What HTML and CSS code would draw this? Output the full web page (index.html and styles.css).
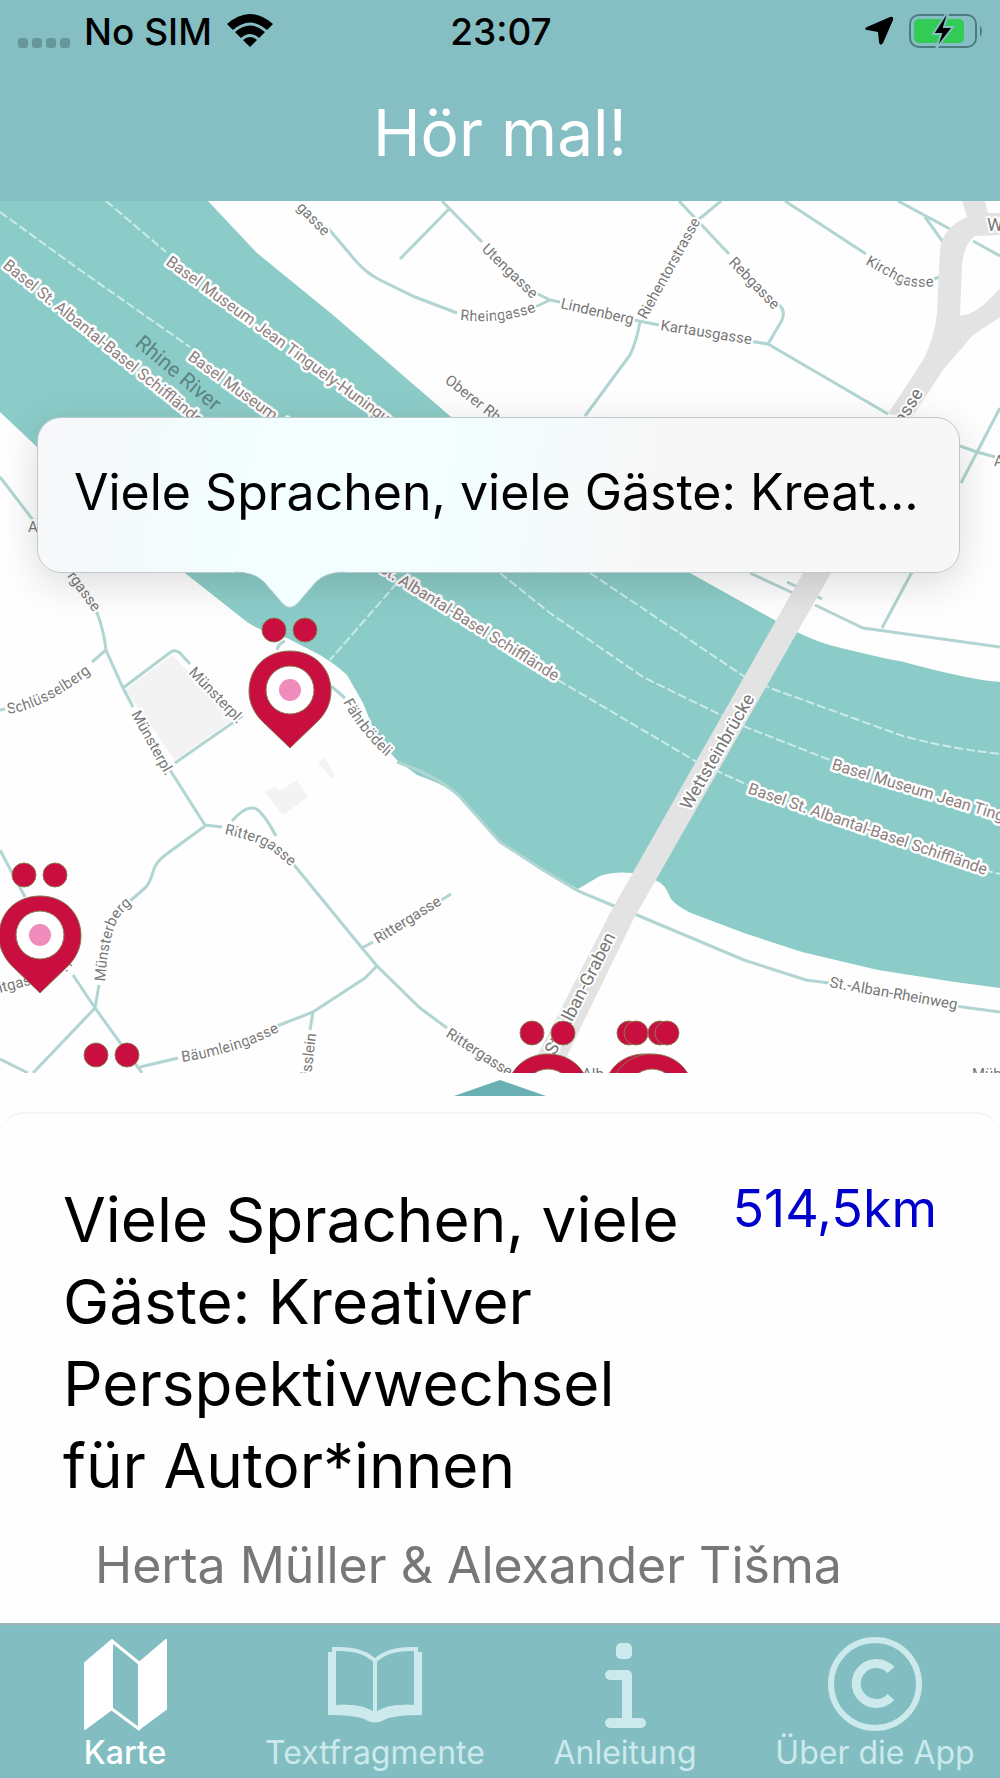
FILE: index.html
```
<!DOCTYPE html>
<html lang="de">
<head>
    <meta charset="UTF-8">
    <meta name="viewport" content="width=device-width, initial-scale=1.0">
    <title>Hör mal!</title>
    <link rel="stylesheet" href="styles.css">
</head>
<body>

    <header class="header">
        <div class="status-bar">
            <div class="status-left">
                <svg class="signal" width="52" height="10" viewBox="0 0 52 10">
                    <rect x="0" width="10" height="10" rx="3"/>
                    <rect x="14" width="10" height="10" rx="3"/>
                    <rect x="28" width="10" height="10" rx="3"/>
                    <rect x="42" width="10" height="10" rx="3"/>
                </svg>
                <span>No SIM</span>
                <svg width="48" height="36" viewBox="0 0 48 36">
                    <path d="M1 11 Q24 -9 47 11 L41 17 Q24 2 7 17 Z"/>
                    <path d="M9 19 Q24 6 39 19 L33 25 Q24 17 15 25 Z"/>
                    <path d="M17 27 Q24 21 31 27 L24 34 Z"/>
                </svg>
            </div>
            <div class="status-time">23:07</div>
            <div class="status-right">
                <svg width="30" height="30" viewBox="0 0 30 30">
                    <path d="M26 1 Q30 0 29 4 L19 27 Q16 31 15 26 L14 16 L3 14 Q-1 13 3 11 Z"/>
                </svg>
                <svg width="76" height="38" viewBox="0 0 76 38">
                    <rect x="2" y="3" width="66" height="32" rx="9" fill="none" stroke="#4c7b80" stroke-width="2"/>
                    <path d="M72 13 Q76 19 72 25 Z" fill="#4c7b80"/>
                    <rect x="6" y="7" width="50" height="24" rx="5" fill="#31cb55"/>
                    <path d="M38 2 L25 22 H33 L28 37 L45 15 H36 L40 2 Z" fill="#000" stroke="#85bfc3" stroke-width="2"/>
                </svg>
            </div>
        </div>
        <h1>Hör mal!</h1>
    </header>

    <main>
        <div class="map">
            <svg class="map-canvas" viewBox="0 201 1000 872">
                <defs>
                    <g id="pin">
                        <circle cx="-16" cy="-60" r="12"/>
                        <circle cx="15" cy="-60" r="12"/>
                        <path d="M0 -39 C24 -39 41 -22 41 1 C41 14 35 24 28 31 L0 58 L-28 31 C-35 24 -41 14 -41 1 C-41 -22 -24 -39 0 -39 Z"/>
                        <circle r="24" class="pin-ring"/>
                        <circle r="11" class="pin-dot"/>
                    </g>
                    <path id="kirchgasse" d="M865 264 L900 283 Q914 290 944 285"/>
                    <path id="muensterberg" d="M105 982 Q108 940 117 921 Q122 911 136 901"/>
                    <path id="rittergasse" d="M224 834 Q256 841 266 847 Q275 852 292 868"/>
                    <path id="rheingasse" d="M460 320 Q502 325 540 310"/>
                    <path id="schluesselberg" d="M8 714 Q46 709 98 667"/>
                    <path id="baeumleingasse" d="M182 1062 Q240 1053 280 1031"/>
                    <path id="faehrboedeli" d="M343 702 Q362 738 400 768"/>
                </defs>

                <!-- Rhine -->
                <path class="river" d="M0 201 H208 L257 253 L333 315 L450 416 L560 500 L690 573 L778 622 Q810 640 833 646 Q890 660 900 661 Q970 680 1000 682 V988 L955 982 L878 970 L802 952 L744 933 L691 913 Q673 904 670 897 Q665 884 657 881 L633 873 Q614 871 600 876 L578 889 L543 870 L500 842 L467 805 Q456 793 450 790 Q440 783 417 775 L397 760 L378 740 L363 703 L347 675 Q335 664 320 655 L287 638 Q262 632 247 622 L185 573 L36 446 L0 412 Z"/>
                <g class="ferry">
                    <path d="M0 212 L80 270 L190 347"/>
                    <path d="M106 201 L166 252"/>
                    <path d="M500 573 L550 613 L643 677 L723 716 L748 728 L830 760"/>
                    <path d="M590 573 L745 677 L770 688 L900 735 Q940 747 1000 754"/>
                    <path d="M558 680 L697 762 L748 785"/>
                    <path d="M984 870 L1000 874"/>
                    <path d="M397 583 L330 660"/>
                </g>

                <!-- squares and buildings -->
                <g class="block">
                    <path d="M172 655 L235 718 L175 760 L125 690 Z"/>
                    <path d="M265 792 L275 787 L280 791 L297 780 L308 797 L283 815 Z"/>
                    <path d="M318 762 L325 758 L335 775 L332 779 Z"/>
                </g>

                <g class="street">
                    <path d="M328 228 L355 260 Q366 273 380 280 L415 297 L457 313"/>
                    <path d="M442 201 L482 242"/>
                    <path d="M449 209 L400 259"/>
                    <path d="M536 293 L550 300 L560 302 M535 307 L550 300"/>
                    <path d="M634 320 L659 325 M640 322 Q637 340 630 355 L585 416"/>
                    <path d="M749 341 L768 344 L782 320 Q786 310 778 304"/>
                    <path d="M768 344 L888 414"/>
                    <path d="M679 201 L729 254 M698 220 L721 201"/>
                    <path d="M785 201 L866 254 M932 280 L939 277"/>
                    <path d="M898 201 L950 229 M925 217 L943 242 M973 241 L1000 256"/>
                    <path d="M960 446 L977 452 L995 457 M1000 408 L961 483 M912 572 L882 628"/>
                    <path d="M750 573 L793 593 M815 605 L863 628 L1000 647 M787 582 L822 599"/>
                    <path d="M0 477 L33 520"/>
                    <path d="M96 610 Q104 630 106 650 L123 688 L133 707 M170 770 L205 825 L222 827"/>
                    <path d="M0 710 L5 709 M92 662 L106 650"/>
                    <path d="M123 688 L168 654 Q174 648 180 653 L190 664"/>
                    <path d="M234 712 L241 717 L175 763"/>
                    <path d="M205 826 L168 853 Q155 862 153 872 Q149 885 145 888 L130 901"/>
                    <path d="M232 821 Q244 807 253 808 Q261 808 276 836"/>
                    <path d="M290 860 L362 948 L377 966 L420 1008 L447 1028 M362 948 L373 942 M440 901 L451 894"/>
                    <path d="M377 966 L365 978 L313 1012 L277 1026 M313 1012 L310 1030"/>
                    <path d="M99 985 L95 1008 L33 1073 M73 975 L95 1008 L142 1073 M140 1067 L178 1058"/>
                    <path d="M0 850 L25 897 M0 1059 L28 1073"/>
                    <path d="M277 650 Q278 644 285 641 M331 686 L345 698"/>
                    <path d="M397 762 Q440 777 460 797 L500 842 L543 870 L578 891 L614 906 L637 915 L744 960 L806 980 L829 983 M955 1006 L1000 1012"/>
                </g>

                <g class="main-road">
                    <path d="M962 201 H985 L988 213 H1000 V235 L975 236 Q963 245 962 267 L960 315 Q975 317 1000 288 V317 L973 335 L943 370 L912 417 L888 414 L923 360 Q934 340 937 313 L940 250 Q942 228 967 217 Z"/>
                    <path d="M803 573 H831 L633 920 L565 1060 L535 1060 L610 913 Z"/>
                </g>

                <g class="label">
                    <g class="ferry-label">
                        <text transform="translate(165 264) rotate(36)">Basel Museum Jean Tinguely-Huningue</text>
                        <text transform="translate(2 267) rotate(39)">Basel St. Albantal-Basel Schifflände</text>
                        <text transform="translate(187 359) rotate(36)">Basel Museum Jean</text>
                        <text transform="translate(378 571) rotate(32)">St. Albantal-Basel Schifflände</text>
                        <text transform="translate(831 769) rotate(17)">Basel Museum Jean Ting</text>
                        <text transform="translate(747 793) rotate(19)">Basel St. Albantal-Basel Schifflände</text>
                    </g>
                    <text class="river-name" transform="translate(134 345) rotate(40)">Rhine River</text>
                    <text class="large" transform="translate(690 811) rotate(-60)">Wettsteinbrücke</text>
                    <text class="large" transform="translate(555 1056) rotate(-63)">St. Alban-Graben</text>
                    <text class="large" transform="translate(898 434) rotate(-58)">gasse</text>
                    <text class="large" x="987" y="231">W</text>
                    <text transform="translate(296 208) rotate(46)">gasse</text>
                    <text transform="translate(481 250) rotate(44)">Utengasse</text>
                    <text transform="translate(560 308) rotate(13)">Lindenberg</text>
                    <text transform="translate(660 330) rotate(9)">Kartausgasse</text>
                    <text transform="translate(646 320) rotate(-61)">Riehentorstrasse</text>
                    <text transform="translate(728 263) rotate(46)">Rebgasse</text>
                    <text transform="translate(444 382) rotate(38)">Oberer Rheinweg</text>
                    <text transform="translate(67 576) rotate(54)">rgasse</text>
                    <text transform="translate(188 673) rotate(46)">Münsterpl.</text>
                    <text transform="translate(131 714) rotate(61)">Münsterpl.</text>
                    <text transform="translate(378 944) rotate(-32)">Rittergasse</text>
                    <text transform="translate(445 1036) rotate(33)">Rittergasse</text>
                    <text transform="translate(829 987) rotate(10)">St.-Alban-Rheinweg</text>
                    <text transform="translate(311 1076) rotate(-83)">isslein</text>
                    <text transform="translate(0 993) rotate(-15)">itgasse</text>
                    <text transform="translate(60 962) rotate(57)">tr.</text>
                    <text x="582" y="1079">Alb</text>
                    <text x="972" y="1079">Müh</text>
                    <text x="994" y="466">A</text>
                    <text x="28" y="532">A</text>
                    <text><textPath href="#kirchgasse">Kirchgasse</textPath></text>
                    <text><textPath href="#muensterberg">Münsterberg</textPath></text>
                    <text><textPath href="#rittergasse">Rittergasse</textPath></text>
                    <text><textPath href="#rheingasse">Rheingasse</textPath></text>
                    <text><textPath href="#schluesselberg">Schlüsselberg</textPath></text>
                    <text><textPath href="#baeumleingasse">Bäumleingasse</textPath></text>
                    <text><textPath href="#faehrboedeli">Fährbödeli</textPath></text>
                </g>

                <g class="pins">
                    <use href="#pin" x="290" y="690"/>
                    <use href="#pin" x="40" y="935"/>
                    <use href="#pin" x="112" y="1115"/>
                    <use href="#pin" x="548" y="1093"/>
                    <use href="#pin" x="645" y="1093"/>
                    <use href="#pin" x="652" y="1093"/>
                </g>
            </svg>

            <button class="callout" type="button">
                <span>Viele Sprachen, viele Gäste: Kreat...</span>
                <svg class="callout-tail" width="110" height="40" viewBox="0 0 110 40">
                    <path d="M0 0 V2 Q19 2 29 12 L47 33 Q55 42 63 33 L81 12 Q91 2 110 2 V0 Z" fill="#f2feff"/>
                    <path d="M0 2 Q19 2 29 12 L47 33 Q55 42 63 33 L81 12 Q91 2 110 2" fill="none" stroke="#a9c9ca" stroke-width="1"/>
                </svg>
            </button>
        </div>

        <svg class="handle" width="92" height="16" viewBox="0 0 92 16">
            <path d="M46 0 L92 16 H0 Z"/>
        </svg>

        <article class="card">
            <div class="card-top">
                <h2>Viele Sprachen, viele Gäste: Kreativer Perspektivwechsel für&nbsp;Autor*innen</h2>
                <span class="distance">514,5km</span>
            </div>
            <p class="authors">Herta Müller &amp; Alexander Tišma</p>
        </article>
    </main>

    <nav class="tabs">
        <a href="#karte" class="active">
            <svg width="96" height="96" viewBox="0 0 96 96">
                <path d="M8 26 L35 3 V72 L8 92 Z M62 26 L89 3 V72 L62 92 Z" fill="currentColor" stroke="currentColor" stroke-width="2" stroke-linejoin="round"/>
                <path d="M35 4 L62 26 M35 72 L62 92" stroke="currentColor" stroke-width="3" stroke-linecap="round"/>
            </svg>
            Karte
        </a>
        <a href="#textfragmente">
            <svg width="96" height="96" viewBox="0 0 96 96">
                <path d="M1 15 H9 V68 Q36 66 48 76 Q60 66 87 68 V15 H95 V78 Q66 78 57 83 Q48 88 39 83 Q30 78 1 78 Z" fill="currentColor"/>
                <path d="M7 12 Q36 11 48 24 Q60 11 89 12 V70 Q60 68 48 78 Q36 68 7 70 Z M48 24 V78" fill="none" stroke="currentColor" stroke-width="4"/>
            </svg>
            Textfragmente
        </a>
        <a href="#anleitung">
            <svg width="96" height="96" viewBox="0 0 96 96">
                <rect x="39" y="6" width="16" height="16" rx="5" fill="currentColor"/>
                <path d="M33 38 H50 V86 M33 86 H64" fill="none" stroke="currentColor" stroke-width="10" stroke-linecap="round" stroke-linejoin="round"/>
            </svg>
            Anleitung
        </a>
        <a href="#ueber">
            <svg width="96" height="96" viewBox="0 0 96 96">
                <circle cx="48" cy="47" r="44" fill="none" stroke="currentColor" stroke-width="6"/>
                <path d="M64 33 A20 20 0 1 0 64 60" fill="none" stroke="currentColor" stroke-width="9"/>
            </svg>
            Über die App
        </a>
    </nav>

</body>
</html>
```

FILE: styles.css
```
* {
    box-sizing: border-box;
}

body {
    font-family: Inter, "Liberation Sans", sans-serif;
    display: flex;
    flex-direction: column;
    min-height: 100vh;
    margin: 0;
    background-color: #fefefe;
    color: #000;
}

svg {
    display: block;
}

.header {
    background-color: #85bfc3;
    height: 201px;
}

.status-bar {
    display: grid;
    grid-template-columns: 1fr auto 1fr;
    align-items: center;
    height: 62px;
    padding: 0 16px 0 18px;
    font-size: 37px;
    font-weight: 500;
}

.status-left,
.status-right {
    display: flex;
    align-items: center;
    gap: 14px;
}

.status-right {
    justify-content: flex-end;
}

.signal {
    margin-top: 24px;
    fill: #68979b;
}

h1 {
    margin: 31px 0 0;
    color: #fff;
    font-size: 64px;
    font-weight: 400;
    line-height: 80px;
    text-align: center;
}

/* map */

.map {
    position: relative;
}

.map-canvas {
    width: 100%;
    height: auto;
}

.river {
    fill: #8cccc8;
}

.ferry path {
    fill: none;
    stroke: #c9ecea;
    stroke-width: 2;
    stroke-dasharray: 9 3;
}

.block {
    fill: #f3f3f3;
}

.street path {
    fill: none;
    stroke: #b1d5d2;
    stroke-width: 3;
}

.main-road {
    fill: #e3e3e3;
}

.label text {
    font-family: Roboto, sans-serif;
    font-size: 15px;
    fill: #777;
    stroke: #fff;
    stroke-width: 4px;
    stroke-linejoin: round;
    paint-order: stroke;
}

.label .ferry-label text {
    font-size: 16px;
    fill: #8d7f7f;
    stroke-width: 5px;
}

.label .large {
    font-size: 18px;
}

.label .river-name {
    font-size: 21px;
    fill: #5c8482;
    stroke: none;
}

.pins {
    fill: #c90f40;
    stroke: #8a7a50;
    stroke-width: 1px;
}

.pin-ring {
    fill: #fff;
}

.pin-dot {
    fill: #f08cbb;
    stroke: none;
}

.callout {
    position: absolute;
    top: 216px;
    left: 37px;
    right: 40px;
    height: 156px;
    padding: 0 36px 6px;
    border: 1px solid #bcc8c9;
    border-radius: 24px;
    background: linear-gradient(100deg, #f7f7f9 0%, #f2feff 24%, #f2feff 44%, #f7f7f7 66%);
    box-shadow: 0 10px 40px rgba(0, 0, 0, 0.14);
    color: #000;
    font-family: inherit;
    font-size: 50px;
    text-align: left;
    white-space: nowrap;
}

.callout-tail {
    position: absolute;
    top: 152px;
    left: 197px;
}

.handle {
    margin: 7px auto 16px;
    fill: #6ab1b5;
}

/* card */

.card {
    padding: 65px 63px 24px;
    border-top: 2px solid #f4f4f4;
    border-radius: 24px;
}

.card-top {
    display: flex;
    justify-content: space-between;
    align-items: flex-start;
}

h2 {
    max-width: 640px;
    margin: 0;
    font-size: 62px;
    font-weight: 400;
    line-height: 82px;
}

.distance {
    color: #0000cd;
    font-size: 52px;
    line-height: 60px;
}

.authors {
    margin: 28px 0 0 32px;
    color: #777;
    font-size: 50px;
    line-height: 60px;
}

/* tabs */

.tabs {
    display: grid;
    grid-template-columns: repeat(4, 1fr);
    margin-top: auto;
    height: 155px;
    border-top: 2px solid #a3b5b6;
    background-color: #82bdc1;
}

.tabs a {
    display: flex;
    flex-direction: column;
    align-items: center;
    padding-top: 12px;
    color: #cce9ec;
    font-size: 32px;
    line-height: 40px;
    text-decoration: none;
    white-space: nowrap;
}

.tabs .active {
    color: #fff;
    font-weight: 500;
}
```
